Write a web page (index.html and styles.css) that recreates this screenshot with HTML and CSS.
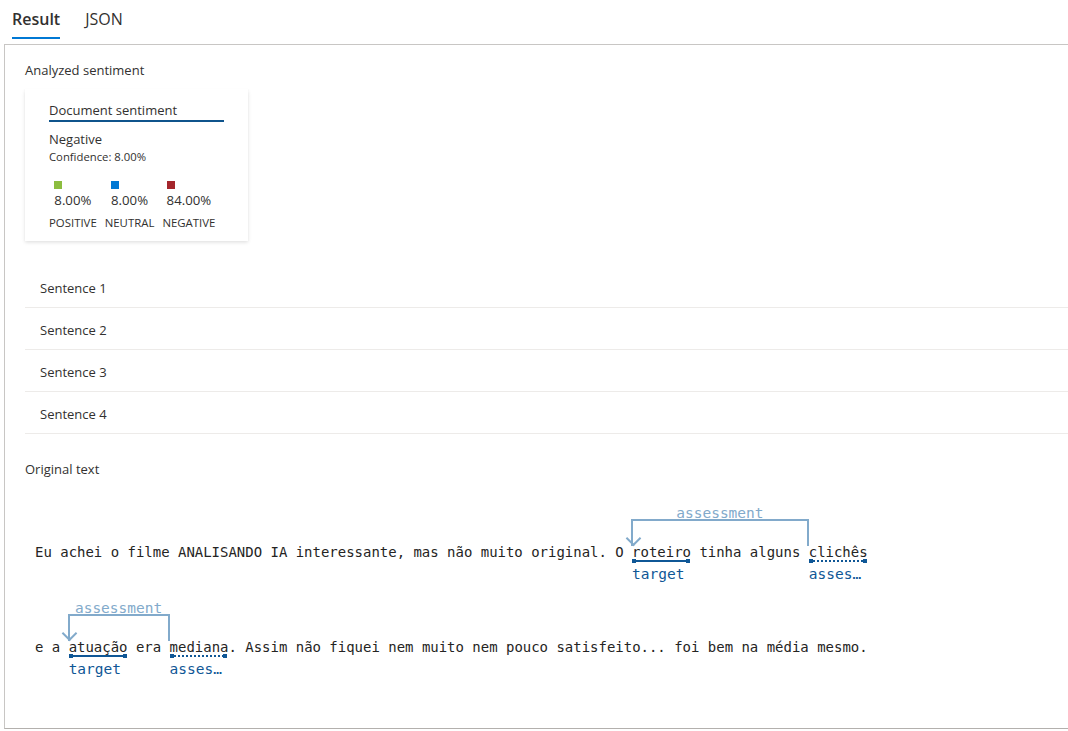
FILE: index.html
```html
<!DOCTYPE html>
<html lang="pt">
<head>
<meta charset="utf-8">
<title>Result</title>
<link rel="stylesheet" href="styles.css">
</head>
<body>
<div class="tabs">
  <div class="tab active">Result</div>
  <div class="tab">JSON</div>
</div>
<div class="panel">
  <div class="section-title">Analyzed sentiment</div>
  <div class="card">
    <div class="card-title">Document sentiment</div>
    <div class="sentiment">Negative</div>
    <div class="confidence">Confidence: 8.00%</div>
    <div class="scores">
      <div class="score">
        <div class="score-top"><span class="swatch pos"></span><span class="pct">8.00%</span></div>
        <div class="score-label">POSITIVE</div>
      </div>
      <div class="score">
        <div class="score-top"><span class="swatch neu"></span><span class="pct">8.00%</span></div>
        <div class="score-label">NEUTRAL</div>
      </div>
      <div class="score">
        <div class="score-top"><span class="swatch neg"></span><span class="pct">84.00%</span></div>
        <div class="score-label">NEGATIVE</div>
      </div>
    </div>
  </div>
  <div class="sentences">
    <div class="sentence">Sentence 1</div>
    <div class="sentence">Sentence 2</div>
    <div class="sentence">Sentence 3</div>
    <div class="sentence">Sentence 4</div>
  </div>
  <div class="section-title orig">Original text</div>
  <div class="annotated">
    <div class="aline"><span class="brk brk-1"><span class="brk-lbl">assessment</span></span>Eu achei o filme ANALISANDO IA interessante, mas não muito original. O <span class="tok">roteiro<span class="ul"></span><span class="lbl">target</span></span> tinha alguns <span class="tok">clichês<span class="ul dot"></span><span class="lbl">asses…</span></span></div>
    <div class="aline"><span class="brk brk-2"><span class="brk-lbl">assessment</span></span>e a <span class="tok">atuação<span class="ul"></span><span class="lbl">target</span></span> era <span class="tok">mediana<span class="ul dot"></span><span class="lbl">asses…</span></span>. Assim não fiquei nem muito nem pouco satisfeito... foi bem na média mesmo.</div>
  </div>
</div>
</body>
</html>
```

FILE: styles.css
```css
* { box-sizing: border-box; }

body {
  margin: 0;
  background: #ffffff;
  color: #323130;
  font-family: "Open Sans", "Noto Sans", sans-serif;
  font-size: 13px;
}

.tabs {
  display: flex;
  gap: 25px;
  padding-left: 12px;
  height: 44px;
}

.tab {
  padding-top: 8px;
  padding-bottom: 7px;
  line-height: 22px;
  font-size: 16px;
  color: #323130;
  border-bottom: 2px solid transparent;
  height: 39px;
}

.tab.active {
  font-weight: 600;
  border-bottom-color: #0078d4;
}

.panel {
  margin-left: 4px;
  border: 1px solid #c8c6c4;
  border-right: none;
  border-bottom-color: #b3b0ad;
  padding: 15px 0 36px 20px;
  height: 685px;
}

.section-title {
  line-height: 20px;
  font-size: 13px;
  color: #323130;
}

.card {
  margin-top: 9px;
  width: 223px;
  height: 152px;
  padding: 12px 0 0 24px;
  background: #fff;
  box-shadow: 0 1.6px 3.6px rgba(0, 0, 0, 0.13), 0 0.3px 0.9px rgba(0, 0, 0, 0.11);
}

.card-title {
  width: 175px;
  line-height: 19px;
  border-bottom: 2px solid #0f548c;
  font-size: 13px;
}

.sentiment {
  margin-top: 8px;
  line-height: 18px;
  font-size: 13px;
}

.confidence {
  margin-top: 1px;
  line-height: 16px;
  font-size: 11.3px;
}

.scores {
  display: flex;
  gap: 8px;
  margin-top: 16px;
}

.score {
  display: flex;
  flex-direction: column;
  align-items: center;
}

.score-top {
  display: flex;
  flex-direction: column;
  align-items: flex-start;
}

.swatch {
  display: block;
  width: 8px;
  height: 8px;
}

.swatch.pos { background: #8cbd3f; }
.swatch.neu { background: #0078d4; }
.swatch.neg { background: #a4262c; }

.pct {
  margin-top: 2px;
  line-height: 18px;
  font-size: 13.2px;
}

.score-label {
  margin-top: 7px;
  line-height: 14px;
  font-size: 11.4px;
}

.sentences {
  margin-top: 25px;
}

.sentence {
  height: 42px;
  padding: 12px 0 0 15px;
  line-height: 20px;
  border-bottom: 1px solid #edebe9;
  font-size: 13px;
}

.section-title.orig {
  margin-top: 25px;
}

.annotated {
  margin-top: 23px;
  font-family: "DejaVu Sans Mono", "Liberation Mono", monospace;
  font-size: 13.98px;
  color: #252423;
}

.aline {
  position: relative;
  padding: 40px 0 35px 10px;
  line-height: 20px;
  white-space: pre;
}

.tok {
  position: relative;
  display: inline-block;
}

.ul {
  position: absolute;
  left: 0;
  right: 1px;
  top: 18px;
  height: 2px;
  background: #0f5796;
}

.ul.dot {
  background: repeating-linear-gradient(90deg, #0f5796 0 2px, transparent 2px 4px);
}

.ul::before,
.ul::after {
  content: "";
  position: absolute;
  top: -1px;
  width: 4px;
  height: 4px;
  background: #0f5796;
}

.ul::before { left: 0; }
.ul::after { right: 0; }

.lbl {
  position: absolute;
  left: 0;
  top: 23px;
  line-height: 18px;
  font-size: 14.5px;
  color: #0f5796;
  white-space: nowrap;
}

.brk {
  position: absolute;
  top: 17px;
  height: 27px;
  border: 2px solid #82aacb;
  border-bottom: none;
}

.brk-1 {
  left: calc(10px + 71ch - 1px);
  width: calc(21ch + 1px);
}

.brk-2 {
  left: calc(10px + 4ch - 1px);
  width: calc(12ch + 1px);
}

.brk::after {
  content: "";
  position: absolute;
  left: -5.5px;
  top: 12px;
  width: 9px;
  height: 9px;
  border-right: 2px solid #82aacb;
  border-bottom: 2px solid #82aacb;
  transform: rotate(45deg);
}

.brk-lbl {
  position: absolute;
  left: 0;
  right: 0;
  top: -16px;
  line-height: 16px;
  font-size: 14.5px;
  text-align: center;
  color: #82aacb;
  white-space: nowrap;
}
```
